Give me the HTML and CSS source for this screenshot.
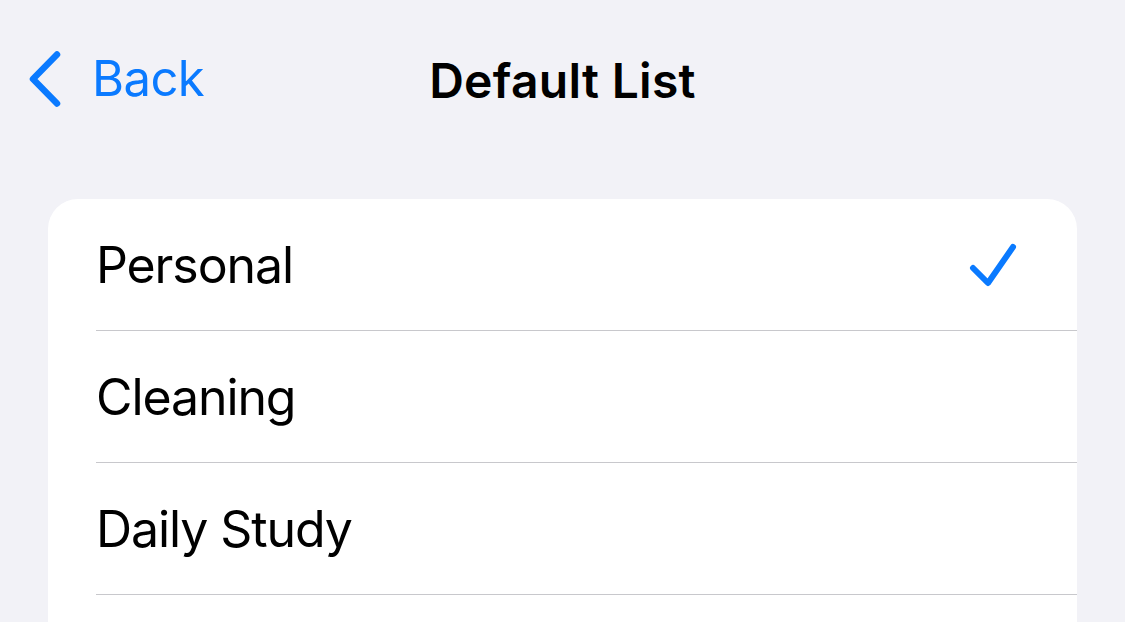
FILE: index.html
```html
<!DOCTYPE html>
<html>
<head>
<meta charset="utf-8">
<link rel="stylesheet" href="styles.css">
</head>
<body>
<header class="nav">
  <div class="nav-left">
    <a class="back">
      <svg class="chev" viewBox="0 0 34 56" width="34" height="56"><path d="M29 3.5 L5 28 L29 52.5" fill="none" stroke="#0a7aff" stroke-width="6.5" stroke-linecap="round" stroke-linejoin="round"/></svg>
      <span class="back-label">Back</span>
    </a>
  </div>
  <h1 class="title">Default List</h1>
  <div class="nav-right"></div>
</header>
<main class="card">
  <div class="row">
    <span class="label">Personal</span>
    <svg class="check" viewBox="0 0 48 46" width="48" height="46"><path d="M4 26 L19 41 L44 5" fill="none" stroke="#0a7aff" stroke-width="6" stroke-linecap="round" stroke-linejoin="round"/></svg>
  </div>
  <div class="row">
    <span class="label">Cleaning</span>
  </div>
  <div class="row">
    <span class="label">Daily Study</span>
  </div>
</main>
</body>
</html>
```
FILE: styles.css
```css
html, body {
  margin: 0;
  padding: 0;
  background: #f2f2f7;
  font-family: Inter, "Noto Sans", "Liberation Sans", sans-serif;
  overflow: hidden;
}
.nav {
  height: 160px;
  display: grid;
  grid-template-columns: 1fr auto 1fr;
  align-items: center;
}
.nav-left {
  padding-left: 28px;
}
.back {
  display: inline-flex;
  align-items: center;
  gap: 30px;
  color: #0a7aff;
  text-decoration: none;
}
.chev {
  display: block;
  margin-top: 2px;
}
.back-label {
  font-size: 49px;
  font-weight: 400;
  letter-spacing: -0.6px;
}
.title {
  margin: 0;
  font-size: 48px;
  font-weight: 600;
  color: #000;
  letter-spacing: 0.3px;
}
.card {
  margin: 39px 48px 0;
  padding-bottom: 60px;
  background: #fff;
  border-radius: 30px;
  overflow: hidden;
}
.row {
  height: 131px;
  margin-left: 48px;
  padding-right: 60px;
  display: flex;
  align-items: center;
  justify-content: space-between;
  border-bottom: 1px solid #c8c8cc;
}
.label {
  font-size: 50px;
  color: #000;
  letter-spacing: -1.1px;
}
.check {
  display: block;
}
```
